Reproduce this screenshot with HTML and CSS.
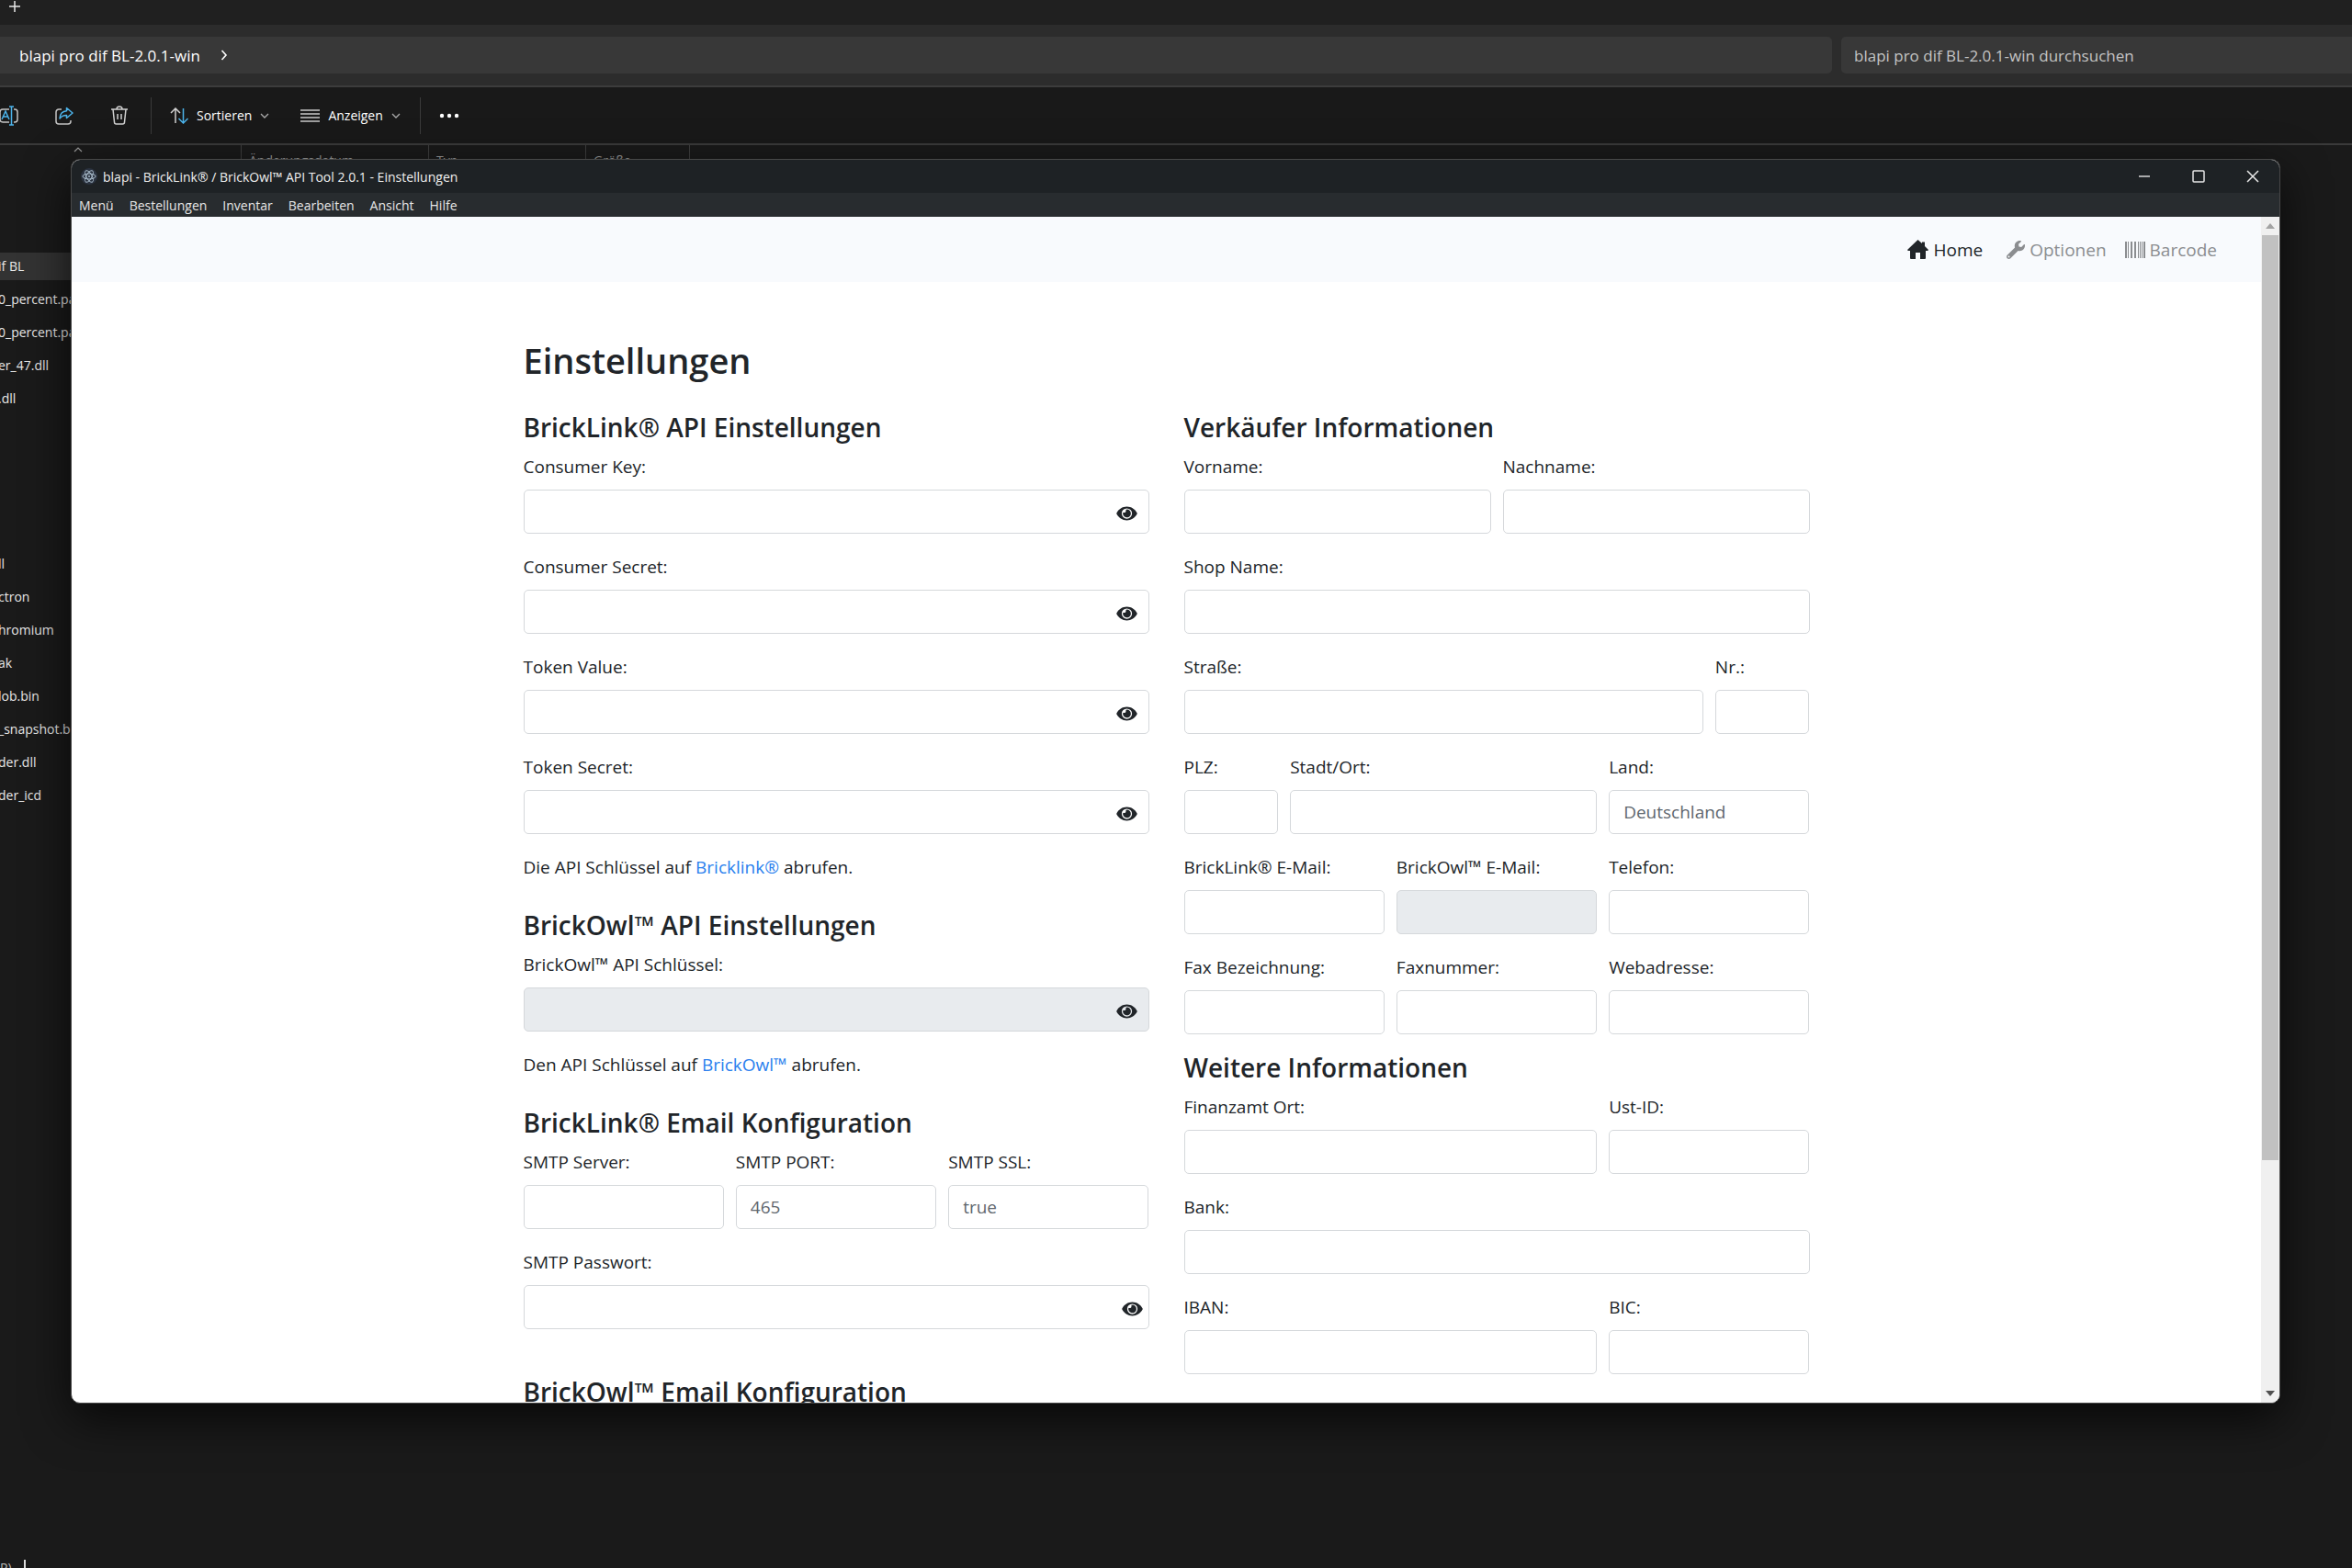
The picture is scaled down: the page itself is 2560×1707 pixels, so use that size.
FILE: index.html
```html
<!DOCTYPE html>
<html lang="de">
<head>
<meta charset="utf-8">
<title>blapi - Einstellungen</title>
<link rel="stylesheet" href="styles.css">
</head>
<body>
<svg class="sprite" aria-hidden="true">
  <symbol id="eye" viewBox="0 0 576 512"><path d="M288 144a110.940 110.940 0 0 0-31.240 5 55.400 55.400 0 0 1 7.240 27 56 56 0 0 1-56 56 55.400 55.400 0 0 1-27-7.240A111.710 111.710 0 1 0 288 144zm284.520 97.400C518.290 135.590 410.930 64 288 64S57.680 135.640 3.480 241.410a32.350 32.350 0 0 0 0 29.190C57.710 376.410 165.070 448 288 448s230.320-71.640 284.520-177.410a32.350 32.350 0 0 0 0-29.190zM288 400a144 144 0 1 1 144-144 143.930 143.930 0 0 1-144 144z"/></symbol>
  <symbol id="chevron" viewBox="0 0 10 10"><path d="M1 3l4 4 4-4" fill="none" stroke="currentColor" stroke-width="1.300"/></symbol>
</svg>

<div class="explorer">
  <div class="tabs"><button class="bare" aria-label="Neuer Tab"><svg width="14" height="14" viewBox="0 0 14 14" fill="none" stroke="#e8e8e8" stroke-width="1.500"><path d="M7 1v12M1 7h12"/></svg></button></div>
  <div class="address-bar">
    <div class="crumbs"><a href="#">blapi pro dif BL-2.0.1-win</a><svg width="8" height="12" viewBox="0 0 8 12" fill="none" stroke="#fff" stroke-width="1.600"><path d="M1.500 1l4.500 5-4.500 5"/></svg></div>
    <input class="search" type="text" aria-label="Suchen" placeholder="blapi pro dif BL-2.0.1-win durchsuchen">
  </div>
  <div class="toolbar">
    <div class="tool-icons">
      <button class="bare" aria-label="Umbenennen"><svg width="20" height="22" viewBox="0 0 20 22" fill="none" stroke-width="1.500"><path d="M10 4H3a3 3 0 0 0-3 3v8a3 3 0 0 0 3 3h7M15 4h1a3 3 0 0 1 3 3v8a3 3 0 0 1-3 3h-1" stroke="#c4c4c4"/><path d="M2 15l4-9 4 9M3.500 12h5M12.500 1v20M10 1h5M10 21h5" stroke="#4cb3ea"/></svg></button>
      <button class="bare" aria-label="Freigeben"><svg width="20" height="20" viewBox="0 0 20 20" fill="none" stroke-width="1.500"><path d="M7 3H4a3 3 0 0 0-3 3v10a3 3 0 0 0 3 3h10a3 3 0 0 0 3-3v-1" stroke="#c4c4c4"/><path d="M12.500 1.500L19 7l-6.500 5.500V9.500C9 9.300 7 10.500 5 13c.300-5 3-8 7.500-8.300z" stroke="#4cb3ea" stroke-linejoin="round"/></svg></button>
      <button class="bare" aria-label="Löschen"><svg width="20" height="21" viewBox="0 0 20 21" fill="none" stroke="#d0d0d0" stroke-width="1.500"><path d="M1 4h18M7 4a3 3 0 0 1 6 0M3 4l1.500 14a2 2 0 0 0 2 2h7a2 2 0 0 0 2-2L17 4M8 9v6M12 9v6"/></svg></button>
    </div>
    <div class="tool-group">
      <button class="bare tool"><svg width="20" height="18" viewBox="0 0 20 18" fill="none" stroke-width="1.500"><path d="M6 17V1M1 6l5-5 5 5" stroke="#d0d0d0"/><path d="M14.500 1v16M9.500 12l5 5 5-5" stroke="#4cb3ea"/></svg><span>Sortieren</span><svg width="10" height="10"><use href="#chevron"/></svg></button>
      <button class="bare tool"><svg width="21" height="14" viewBox="0 0 21 14" stroke="#c8c8c8" stroke-width="1.500"><path d="M0 1h21M0 5h21M0 9h21M0 13h21"/></svg><span>Anzeigen</span><svg width="10" height="10"><use href="#chevron"/></svg></button>
    </div>
    <button class="bare more" aria-label="Mehr"><svg width="22" height="6" viewBox="0 0 22 6" fill="#fff"><circle cx="3" cy="3" r="2.200"/><circle cx="11" cy="3" r="2.200"/><circle cx="19" cy="3" r="2.200"/></svg></button>
  </div>
  <div class="columns">
    <span class="col-name"><svg width="10" height="6" viewBox="0 0 10 6" fill="none" stroke="#999" stroke-width="1.200"><path d="M1 5l4-4 4 4"/></svg></span><span class="col-date">Änderungsdatum</span><span class="col-type">Typ</span><span class="col-size">Größe</span>
  </div>
  <ul class="files">
    <li class="selected">if BL</li><li>0_percent.pak</li><li>0_percent.pak</li><li>er_47.dll</li><li>.dll</li><li></li><li></li><li></li><li></li><li>ll</li><li>ctron</li><li>hromium</li><li>ak</li><li>lob.bin</li><li>_snapshot.bin</li><li>der.dll</li><li>der_icd</li>
  </ul>
  <div class="status"><span>P)</span><i class="caret"></i></div>
</div>

<div class="window">
  <header class="title-bar">
    <svg width="18" height="18" viewBox="0 0 18 18" fill="none" stroke="#a9bccb" stroke-width="1"><circle cx="9" cy="9" r="9" fill="#2b3340" stroke="none"/><ellipse cx="9" cy="9" rx="7" ry="3"/><ellipse cx="9" cy="9" rx="7" ry="3" transform="rotate(60 9 9)"/><ellipse cx="9" cy="9" rx="7" ry="3" transform="rotate(120 9 9)"/><circle cx="9" cy="9" r="1" fill="#a9bccb" stroke="none"/></svg>
    <span class="title">blapi - BrickLink® / BrickOwl™ API Tool 2.0.1 - Einstellungen</span>
    <div class="controls">
      <button class="bare" aria-label="Minimieren"><svg width="14" height="14" viewBox="0 0 14 14" fill="none" stroke="#d8d8d8" stroke-width="1.300"><path d="M1 7h12"/></svg></button>
      <button class="bare" aria-label="Maximieren"><svg width="14" height="14" viewBox="0 0 14 14" fill="none" stroke="#e8e8e8" stroke-width="1.500"><rect x="1" y="1" width="12" height="12" rx="1"/></svg></button>
      <button class="bare" aria-label="Schließen"><svg width="14" height="14" viewBox="0 0 14 14" fill="none" stroke="#e8e8e8" stroke-width="1.500"><path d="M1 1l12 12M13 1L1 13"/></svg></button>
    </div>
  </header>
  <nav class="menu"><button class="bare">Menü</button><button class="bare">Bestellungen</button><button class="bare">Inventar</button><button class="bare">Bearbeiten</button><button class="bare">Ansicht</button><button class="bare">Hilfe</button></nav>
  <div class="view">
    <div class="page">
      <nav class="navbar">
        <a class="active" href="#"><svg width="23" height="21" viewBox="0 0 23 21" fill="currentColor"><path d="M11.500 0L16 4V2.500h3V7l4 4-.800 1H20v8a1 1 0 0 1-1 1h-5v-7H9v7H4a1 1 0 0 1-1-1v-8H.800L0 11z"/></svg>Home</a>
        <a href="#"><svg width="20" height="20" viewBox="0 0 512 512" fill="currentColor"><path d="M507.730 109.100c-2.240-9.030-13.540-12.090-20.120-5.510l-74.360 74.360-67.880-11.310-11.310-67.880 74.360-74.360c6.620-6.620 3.430-17.900-5.660-20.160-47.380-11.740-99.550.910-136.580 37.930-39.640 39.640-50.550 97.100-34.050 147.200L18.740 402.760c-24.990 24.990-24.990 65.510 0 90.500 24.990 24.990 65.510 24.990 90.500 0l213.210-213.210c50.120 16.710 107.470 5.680 147.370-34.220 37.070-37.070 49.700-89.320 37.910-136.730zM64 472c-13.250 0-24-10.750-24-24 0-13.260 10.750-24 24-24s24 10.740 24 24c0 13.250-10.750 24-24 24z"/></svg>Optionen</a>
        <a href="#"><svg width="22" height="18" viewBox="0 0 22 18" fill="currentColor"><path d="M0 0h2v18H0zM3 0h1v18H3zM6 0h2v18H6zM10 0h2v18h-2zM14 0h1v18h-1zM16 0h1v18h-1zM18 0h1v18h-1zM20 0h2v18h-2z"/></svg>Barcode</a>
      </nav>
      <main>
        <h1>Einstellungen</h1>
        <form class="settings">
          <div class="column">
            <section>
              <h2>BrickLink® API Einstellungen</h2>
              <div class="row"><div class="field s12"><label for="ck">Consumer Key:</label><div class="secret"><input id="ck" type="password"><button type="button" class="bare" aria-label="Anzeigen"><svg><use href="#eye"/></svg></button></div></div></div>
              <div class="row"><div class="field s12"><label for="cs">Consumer Secret:</label><div class="secret"><input id="cs" type="password"><button type="button" class="bare" aria-label="Anzeigen"><svg><use href="#eye"/></svg></button></div></div></div>
              <div class="row"><div class="field s12"><label for="tv">Token Value:</label><div class="secret"><input id="tv" type="password"><button type="button" class="bare" aria-label="Anzeigen"><svg><use href="#eye"/></svg></button></div></div></div>
              <div class="row"><div class="field s12"><label for="ts">Token Secret:</label><div class="secret"><input id="ts" type="password"><button type="button" class="bare" aria-label="Anzeigen"><svg><use href="#eye"/></svg></button></div></div></div>
              <p>Die API Schlüssel auf <a href="#">Bricklink®</a> abrufen.</p>
            </section>
            <section>
              <h2>BrickOwl™ API Einstellungen</h2>
              <div class="row"><div class="field s12"><label for="bo">BrickOwl™ API Schlüssel:</label><div class="secret"><input id="bo" type="password" disabled><button type="button" class="bare" aria-label="Anzeigen"><svg><use href="#eye"/></svg></button></div></div></div>
              <p>Den API Schlüssel auf <a href="#">BrickOwl™</a> abrufen.</p>
            </section>
            <section>
              <h2>BrickLink® Email Konfiguration</h2>
              <div class="row">
                <div class="field s4"><label for="srv">SMTP Server:</label><input id="srv" type="text"></div>
                <div class="field s4"><label for="port">SMTP PORT:</label><input id="port" type="text" placeholder="465"></div>
                <div class="field s4"><label for="ssl">SMTP SSL:</label><input id="ssl" type="text" placeholder="true"></div>
              </div>
              <div class="row"><div class="field s12"><label for="pw">SMTP Passwort:</label><div class="secret edge"><input id="pw" type="password"><button type="button" class="bare" aria-label="Anzeigen"><svg><use href="#eye"/></svg></button></div></div></div>
            </section>
            <section class="spaced">
              <h2>BrickOwl™ Email Konfiguration</h2>
            </section>
          </div>
          <div class="column tight">
            <section>
              <h2>Verkäufer Informationen</h2>
              <div class="row">
                <div class="field s6"><label for="vn">Vorname:</label><input id="vn" type="text"></div>
                <div class="field s6"><label for="nn">Nachname:</label><input id="nn" type="text"></div>
              </div>
              <div class="row"><div class="field s12"><label for="shop">Shop Name:</label><input id="shop" type="text"></div></div>
              <div class="row">
                <div class="field s10"><label for="str">Straße:</label><input id="str" type="text"></div>
                <div class="field s2"><label for="nr">Nr.:</label><input id="nr" type="text"></div>
              </div>
              <div class="row">
                <div class="field s2"><label for="plz">PLZ:</label><input id="plz" type="text"></div>
                <div class="field s6"><label for="ort">Stadt/Ort:</label><input id="ort" type="text"></div>
                <div class="field s4"><label for="land">Land:</label><input id="land" type="text" placeholder="Deutschland"></div>
              </div>
              <div class="row">
                <div class="field s4"><label for="blm">BrickLink® E-Mail:</label><input id="blm" type="text"></div>
                <div class="field s4"><label for="bom">BrickOwl™ E-Mail:</label><input id="bom" type="text" disabled></div>
                <div class="field s4"><label for="tel">Telefon:</label><input id="tel" type="text"></div>
              </div>
              <div class="row">
                <div class="field s4"><label for="faxb">Fax Bezeichnung:</label><input id="faxb" type="text"></div>
                <div class="field s4"><label for="fax">Faxnummer:</label><input id="fax" type="text"></div>
                <div class="field s4"><label for="web">Webadresse:</label><input id="web" type="text"></div>
              </div>
            </section>
            <section>
              <h2>Weitere Informationen</h2>
              <div class="row">
                <div class="field s8"><label for="fa">Finanzamt Ort:</label><input id="fa" type="text"></div>
                <div class="field s4"><label for="ust">Ust-ID:</label><input id="ust" type="text"></div>
              </div>
              <div class="row"><div class="field s12"><label for="bank">Bank:</label><input id="bank" type="text"></div></div>
              <div class="row">
                <div class="field s8"><label for="iban">IBAN:</label><input id="iban" type="text"></div>
                <div class="field s4"><label for="bic">BIC:</label><input id="bic" type="text"></div>
              </div>
            </section>
          </div>
        </form>
      </main>
    </div>
    <div class="scrollbar" aria-hidden="true">
      <svg width="10" height="6" viewBox="0 0 10 6" fill="#a3a3a3"><path d="M5 0l5 6H0z"/></svg>
      <div class="track"><div class="thumb"></div></div>
      <svg width="10" height="6" viewBox="0 0 10 6" fill="#505050"><path d="M5 6l5-6H0z"/></svg>
    </div>
  </div>
</div>
</body>
</html>
```
FILE: styles.css
```css
* { box-sizing: border-box; }

body {
  margin: 0;
  height: 100vh;
  overflow: hidden;
  position: relative;
  background: #1a1a1a;
  color: #fff;
  font-family: "Open Sans", "Noto Sans", sans-serif;
  font-size: 14px;
}

.sprite { position: absolute; width: 0; height: 0; }
svg { display: block; flex: none; }

.bare {
  padding: 0;
  border: 0;
  background: none;
  color: inherit;
  font: inherit;
  display: flex;
  align-items: center;
}

/* File manager behind the application window */
.explorer { height: 100%; display: flex; flex-direction: column; }
.tabs { height: 27px; padding: 0 9px; background: #202020; }
.address-bar {
  display: grid;
  grid-template-columns: 1994fr 556fr;
  gap: 10px;
  padding: 13px 0;
  background: #2c2c2c;
  border-bottom: 2px solid #3c3c3c;
}
.crumbs {
  height: 40px;
  display: flex;
  align-items: center;
  gap: 22px;
  padding-left: 21px;
  border-radius: 0 5px 5px 0;
  background: #383838;
  font-size: 17px;
}
.crumbs a { color: #fff; text-decoration: none; }
.search {
  height: 40px;
  padding: 0 14px;
  border: 0;
  border-radius: 5px 0 0 5px;
  background: #383838;
  font: inherit;
  font-size: 17px;
}
.search::placeholder { color: #c4c4c4; opacity: 1; }
.toolbar {
  height: 63px;
  display: flex;
  align-items: center;
  background: #191919;
  border-bottom: 2px solid #3a3a3a;
}
.tool-icons, .tool-group { height: 40px; display: flex; align-items: center; border-right: 1px solid #3a3a3a; }
.tool-icons { gap: 40px; padding-right: 24px; }
.tool-group { gap: 34px; padding: 0 21px 0 20px; }
.tool { gap: 9px; }
.tool svg:last-child { color: #aaa; }
.more { margin-left: 20px; }
.columns { height: 36px; display: flex; line-height: 34px; color: #9a9a9a; }
.columns span { padding-left: 8px; border-right: 1px solid #3e3e3e; }
.columns .col-name { width: 263px; padding: 2px 0 0 80px; }
.col-date { width: 204px; }
.col-type { width: 171px; }
.col-size { width: 113px; }
.files { flex: 1; list-style: none; margin: 0; padding: 78px 0 0; line-height: 36px; color: #e8e8e8; }
.files li { width: 78px; height: 36px; white-space: nowrap; overflow: hidden; text-indent: -2px; }
.files .selected { background: linear-gradient(#333, #333) center / 100% 30px no-repeat; }
.status { height: 9px; display: flex; gap: 13px; overflow: hidden; line-height: 18px; color: #bbb; }
.caret { width: 2px; background: #ddd; }

/* Application window floating above */
.window {
  position: absolute;
  inset: 173px 78px 179px 77px;
  display: flex;
  flex-direction: column;
  overflow: hidden;
  border: 1px solid #484848;
  border-radius: 10px;
  background: #fff;
  box-shadow: 0 16px 50px rgba(0, 0, 0, .7);
}
.title-bar { height: 36px; display: flex; align-items: center; gap: 6px; padding-left: 10px; background: #1e2225; }
.title { color: #f0f0f0; }
.controls { margin-left: auto; display: flex; }
.controls button { width: 59px; height: 36px; justify-content: center; }
.menu { height: 26px; display: flex; gap: 17px; padding: 0 8px; background: #282c2f; color: #e6e6e6; }

.view { flex: 1; min-height: 0; display: flex; }
.page { flex: 1; overflow: hidden; color: #212529; font-size: 19px; line-height: 30px; }
.navbar {
  height: 71px;
  display: flex;
  align-items: center;
  justify-content: flex-end;
  gap: 20px;
  padding: 0 48px;
  background: #f8fafd;
}
.navbar a { display: flex; align-items: center; gap: 5px; color: #8b8d90; text-decoration: none; }
.navbar .active { margin-right: 6px; color: #212529; }

main { max-width: 1400px; margin: 0 auto; padding-top: 61px; }
h1, h2 { margin: 0; font-weight: 600; }
h1 { font-size: 38px; line-height: 48px; margin-bottom: 31px; }
h2 { font-size: 28px; line-height: 36px; margin-bottom: -11px; }
.settings { display: grid; grid-template-columns: 1fr 1fr; gap: 38px; }
.column { display: flex; flex-direction: column; gap: 30px; }
.tight { gap: 18px; }
section { display: flex; flex-direction: column; gap: 21px; }
.row { display: grid; grid-template-columns: repeat(12, minmax(0, 1fr)); gap: 13px; }
.field { display: flex; flex-direction: column; gap: 10px; }
.s2 { grid-column: span 2; }
.s4 { grid-column: span 4; }
.s6 { grid-column: span 6; }
.s8 { grid-column: span 8; }
.s10 { grid-column: span 10; }
.s12 { grid-column: span 12; }
.spaced { margin-top: 20px; }
p { margin: 0; }
p a { color: #2a80ee; text-decoration: none; }

.field input {
  width: 100%;
  height: 48px;
  padding: 0 15px;
  border: 1px solid #d5d8db;
  border-radius: 5px;
  background: #fff;
  font: inherit;
}
.field input::placeholder { color: #5f676e; opacity: 1; }
.field input:disabled { background: #e8ebee; }
.secret { position: relative; }
.secret button { position: absolute; right: 13px; top: 16px; }
.secret button svg { width: 23px; height: 20px; fill: #212529; }
.edge button { right: 7px; }

.scrollbar { width: 20px; display: flex; flex-direction: column; align-items: center; padding: 7px 1px; background: #f0f0f0; }
.track { flex: 1; align-self: stretch; margin: 7px 0; }
.thumb { height: 80.5%; background: #c1c1c1; }
```
